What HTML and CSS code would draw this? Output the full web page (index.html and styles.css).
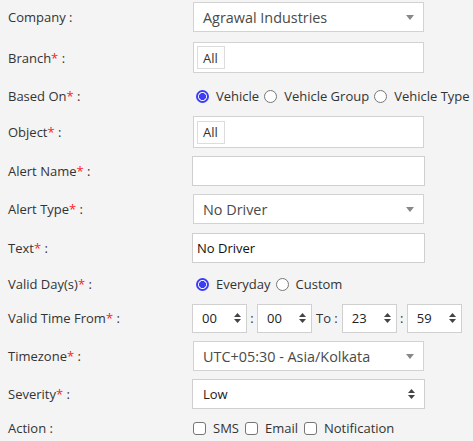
FILE: index.html
```html
<!DOCTYPE html>
<html>
<head>
<meta charset="utf-8">
<link rel="stylesheet" href="styles.css">
</head>
<body>
<form class="form">
  <div class="row h1">
    <span class="lbl">Company :</span>
    <div class="sel2"><span>Agrawal Industries</span><svg class="caret" width="8" height="5" viewBox="0 0 8 5"><path d="M0 0H8L4 5Z"/></svg></div>
  </div>
  <div class="row h2">
    <span class="lbl">Branch<i>*</i> :</span>
    <div class="multi"><span class="tag">All</span></div>
  </div>
  <div class="row h3">
    <span class="lbl">Based On<i>*</i> :</span>
    <div class="opts">
      <span class="opt"><span class="radio on"></span>Vehicle</span>
      <span class="opt"><span class="radio"></span>Vehicle Group</span>
      <span class="opt"><span class="radio"></span>Vehicle Type</span>
    </div>
  </div>
  <div class="row h4">
    <span class="lbl">Object<i>*</i> :</span>
    <div class="multi tall"><span class="tag">All</span></div>
  </div>
  <div class="row h5">
    <span class="lbl">Alert Name<i>*</i> :</span>
    <div class="inp"></div>
  </div>
  <div class="row h6">
    <span class="lbl">Alert Type<i>*</i> :</span>
    <div class="sel2"><span>No Driver</span><svg class="caret" width="8" height="5" viewBox="0 0 8 5"><path d="M0 0H8L4 5Z"/></svg></div>
  </div>
  <div class="row h7">
    <span class="lbl">Text<i>*</i> :</span>
    <div class="inp">No Driver</div>
  </div>
  <div class="row h8">
    <span class="lbl">Valid Day(s)<i>*</i> :</span>
    <div class="opts">
      <span class="opt"><span class="radio on"></span>Everyday</span>
      <span class="opt"><span class="radio"></span>Custom</span>
    </div>
  </div>
  <div class="row h9">
    <span class="lbl">Valid Time From<i>*</i> :</span>
    <div class="times">
      <div class="tsel">00<svg class="ud" width="7" height="10" viewBox="0 0 7 10"><path d="M0 4H7L3.5 0Z M0 6H7L3.5 10Z"/></svg></div>
      <span class="sep">:</span>
      <div class="tsel">00<svg class="ud" width="7" height="10" viewBox="0 0 7 10"><path d="M0 4H7L3.5 0Z M0 6H7L3.5 10Z"/></svg></div>
      <span class="to">To :</span>
      <div class="tsel">23<svg class="ud" width="7" height="10" viewBox="0 0 7 10"><path d="M0 4H7L3.5 0Z M0 6H7L3.5 10Z"/></svg></div>
      <span class="sep">:</span>
      <div class="tsel">59<svg class="ud" width="7" height="10" viewBox="0 0 7 10"><path d="M0 4H7L3.5 0Z M0 6H7L3.5 10Z"/></svg></div>
    </div>
  </div>
  <div class="row h10">
    <span class="lbl">Timezone<i>*</i> :</span>
    <div class="sel2"><span>UTC+05:30 - Asia/Kolkata</span><svg class="caret" width="8" height="5" viewBox="0 0 8 5"><path d="M0 0H8L4 5Z"/></svg></div>
  </div>
  <div class="row h11">
    <span class="lbl">Severity<i>*</i> :</span>
    <div class="nsel">Low<svg class="ud" width="7" height="10" viewBox="0 0 7 10"><path d="M0 4H7L3.5 0Z M0 6H7L3.5 10Z"/></svg></div>
  </div>
  <div class="row h12">
    <span class="lbl">Action :</span>
    <div class="opts checks">
      <span class="opt"><span class="cb"></span>SMS</span>
      <span class="opt"><span class="cb"></span>Email</span>
      <span class="opt"><span class="cb"></span>Notification</span>
    </div>
  </div>
</form>
</body>
</html>
```

FILE: styles.css
```css
html, body {
  margin: 0;
  padding: 0;
}
body {
  background: #f4f4f4;
  font-family: "Open Sans", "Liberation Sans", sans-serif;
  font-size: 13px;
  color: #333;
  width: 473px;
  height: 441px;
  overflow: hidden;
}
.form {
  display: flex;
  flex-direction: column;
  padding-left: 8px;
}
.row {
  display: flex;
  align-items: center;
}
.h1 { height: 34px; }
.h2 { height: 47px; }
.h3 { height: 30px; }
.h4 { height: 42px; }
.h5 { height: 36px; }
.h6 { height: 40px; }
.h7 { height: 38px; }
.h8 { height: 34px; }
.h9 { height: 34px; }
.h10 { height: 42px; }
.h11 { height: 34px; }
.h12 { height: 34px; }

.lbl {
  width: 185px;
  flex: none;
  color: #333;
}
.lbl i {
  font-style: normal;
  color: #ff2020;
}

.sel2 {
  box-sizing: border-box;
  width: 231px;
  height: 30px;
  border: 1px solid #d2d2d2;
  background: #fff;
  display: flex;
  align-items: center;
  justify-content: space-between;
  padding: 0 9px 0 9px;
  font-size: 14.4px;
  color: #4a4a4a;
}
.caret {
  fill: #888;
  flex: none;
}

.multi {
  box-sizing: border-box;
  width: 231px;
  height: 31px;
  border: 1px solid #d2d2d2;
  background: #fff;
  display: flex;
  align-items: center;
  padding-left: 3px;
}
.multi.tall {
  height: 32px;
}
.tag {
  box-sizing: border-box;
  height: 23px;
  width: 28px;
  border: 1px solid #dcdcdc;
  display: flex;
  align-items: center;
  padding-left: 5px;
  color: #333;
}

.inp {
  box-sizing: border-box;
  width: 233px;
  height: 30px;
  margin-left: -1px;
  border: 1px solid #cfcfcf;
  background: #fff;
  display: flex;
  align-items: center;
  padding-left: 4px;
  color: #111;
}

.opts {
  display: flex;
  align-items: center;
  padding-left: 3px;
  gap: 5px;
}
.opt {
  display: flex;
  align-items: center;
  gap: 7px;
  color: #333;
}
.radio {
  box-sizing: border-box;
  width: 13px;
  height: 13px;
  border-radius: 50%;
  border: 1px solid #767676;
  background: #fff;
  flex: none;
}
.radio.on {
  border: 2px solid #3d3df5;
  background: radial-gradient(circle, #3d3df5 0 3.2px, #fff 3.8px);
}
.checks {
  padding-left: 0;
  gap: 6px;
}
.checks .opt {
  gap: 7px;
}
.cb {
  box-sizing: border-box;
  width: 13px;
  height: 13px;
  border: 1px solid #767676;
  border-radius: 3px;
  background: #fff;
  flex: none;
}

.times {
  display: flex;
  align-items: center;
  margin-left: -1px;
}
.tsel {
  box-sizing: border-box;
  width: 55px;
  height: 29px;
  border: 1px solid #d0d0d0;
  background: #fff;
  display: flex;
  align-items: center;
  justify-content: space-between;
  padding: 0 5px 0 9px;
  color: #222;
}
.sep {
  width: 10px;
  text-align: center;
}
.to {
  margin: 0 4px 0 4px;
}
.ud {
  fill: #444;
  flex: none;
}

.nsel {
  box-sizing: border-box;
  width: 233px;
  height: 30px;
  margin-left: -1px;
  border: 1px solid #cfcfcf;
  background: #fff;
  display: flex;
  align-items: center;
  justify-content: space-between;
  padding: 0 9px 0 10px;
  color: #222;
}
```
